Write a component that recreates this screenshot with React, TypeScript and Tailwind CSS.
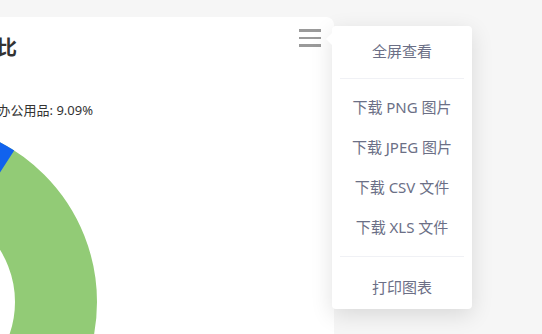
const pageFont = { fontFamily: '"Noto Sans", "Noto Sans CJK SC", sans-serif' }

function MenuItem({ label, first }: { label: string; first?: boolean }) {
  return (
    <div
      className={`flex items-center justify-center text-[15px] text-[#6b6f86] ${first ? 'h-[38px]' : 'h-10'}`}
    >
      {label}
    </div>
  )
}

function Donut() {
  return (
    <svg width="334" height="215" className="block">
      <circle cx="-83" cy="183" r="139" fill="none" stroke="#92cb76" strokeWidth="82" />
      <path
        d="M -83 3 A 180 180 0 0 1 14.2 31.5 L -30.1 100.5 A 98 98 0 0 0 -83 85 Z"
        fill="#1162ee"
      />
    </svg>
  )
}

export default function App() {
  return (
    <div
      className="flex h-[334px] w-[542px] items-start overflow-hidden bg-[#f6f6f6]"
      style={pageFont}
    >
      {/* chart card, cropped on the left */}
      <div className="relative mt-[17px] h-[317px] w-[334px] flex-none overflow-hidden rounded-tr-lg bg-white">
        <div className="-ml-[120px] flex w-[137px] justify-end pt-[17px]">
          <h2 className="whitespace-nowrap text-[20px] font-bold leading-[28px] text-[#333]">
            品类销售占比
          </h2>
        </div>
        <div className="-ml-[120px] mt-[39px] flex w-[213px] justify-end">
          <span className="whitespace-nowrap text-[13px] leading-[18px] text-[#333]">
            办公用品: 9.09%
          </span>
        </div>
        <Donut />
        <button className="absolute right-[13px] top-[12px] flex w-[22px] flex-col gap-[5px]">
          <span className="h-[2.5px] w-full bg-[#9a9a9a]" />
          <span className="h-[2.5px] w-full bg-[#9a9a9a]" />
          <span className="h-[2.5px] w-full bg-[#9a9a9a]" />
        </button>
      </div>

      {/* toolbox menu */}
      <div className="relative z-10 -ml-[2px] mt-[26px] w-[140px] rounded bg-white pb-[2px] pt-[6px] shadow-[0_6px_22px_rgba(0,0,0,0.12)]">
        <div className="absolute -left-[6px] top-[7px] h-0 w-0 border-y-[6.5px] border-r-[6px] border-y-transparent border-r-white" />
        <MenuItem label="全屏查看" first />
        <div className="mx-2 my-2 h-px bg-[#f0f1f5]" />
        <div className="mt-px">
          <MenuItem label="下载 PNG 图片" />
          <MenuItem label="下载 JPEG 图片" />
          <MenuItem label="下载 CSV 文件" />
          <MenuItem label="下载 XLS 文件" />
        </div>
        <div className="mx-2 mb-[10px] mt-[9px] h-px bg-[#f0f1f5]" />
        <MenuItem label="打印图表" />
      </div>
    </div>
  )
}
